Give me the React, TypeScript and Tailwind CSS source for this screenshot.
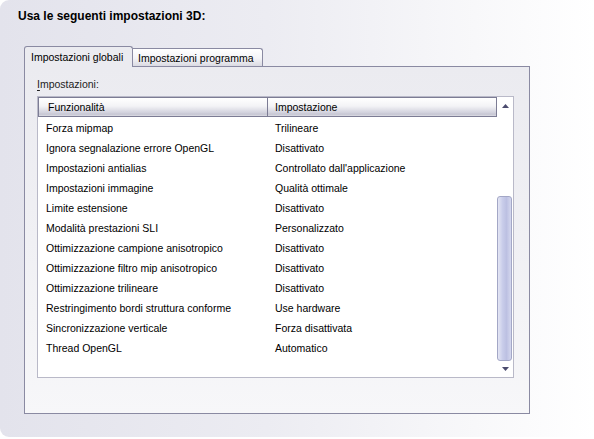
import React from "react";

const rows: [string, string][] = [
  ["Forza mipmap", "Trilineare"],
  ["Ignora segnalazione errore OpenGL", "Disattivato"],
  ["Impostazioni antialias", "Controllato dall'applicazione"],
  ["Impostazioni immagine", "Qualità ottimale"],
  ["Limite estensione", "Disattivato"],
  ["Modalità prestazioni SLI", "Personalizzato"],
  ["Ottimizzazione campione anisotropico", "Disattivato"],
  ["Ottimizzazione filtro mip anisotropico", "Disattivato"],
  ["Ottimizzazione trilineare", "Disattivato"],
  ["Restringimento bordi struttura conforme", "Use hardware"],
  ["Sincronizzazione verticale", "Forza disattivata"],
  ["Thread OpenGL", "Automatico"],
];

function Arrow({ up }: { up?: boolean }) {
  return (
    <svg width="7" height="4" viewBox="0 0 7 4">
      {up ? (
        <polygon points="0,4 7,4 3.5,0" fill="#4b4b6e" />
      ) : (
        <polygon points="0,0 7,0 3.5,4" fill="#4b4b6e" />
      )}
    </svg>
  );
}

export default function App() {
  return (
    <div className="w-[594px] h-[439px] bg-white font-['Liberation_Sans',Arial,sans-serif] text-[10.5px] text-black overflow-hidden">
      <div className="h-[437px] rounded-l-[9px] bg-[linear-gradient(to_right,#e3e3ec_0%,#ececf2_45%,#f8f8fa_80%,#ffffff_100%)] pt-[9px] pl-[18px]">
        <div className="font-bold text-[12px] leading-[14px] h-[14px]">Usa le seguenti impostazioni 3D:</div>

        <div className="ml-[6px] mt-[23px] w-[506px]">
          {/* tabs */}
          <div className="flex items-end h-[20px] relative z-10">
            <div className="w-[109px] h-[21px] -mb-[1px] border border-b-0 border-[#8a8aa2] rounded-tl-[3px] rounded-tr-[3px] bg-[#ebebf0] pl-[6px] leading-[20px]">
              Impostazioni globali
            </div>
            <div className="w-[130px] h-[18px] border border-b-0 border-l-0 border-[#8a8aa2] rounded-tr-[3px] bg-[linear-gradient(to_bottom,#ffffff_0%,#f4f4f7_55%,#dadae2_100%)] pl-[5px] leading-[19px]">
              Impostazioni programma
            </div>
          </div>

          {/* panel */}
          <div className="h-[348px] border border-[#8a8aa2] bg-[linear-gradient(to_bottom,#ebebf0_0%,#f0f0f4_50%,#f7f7f9_100%)] pl-[12px] pt-[11px]">
            <div className="leading-[13px] h-[13px] text-[#222]">
              <span className="underline underline-offset-2">I</span>mpostazioni:
            </div>

            <div className="mt-[5px] w-[477px] h-[282px] border border-[#b9b9c8] bg-white flex">
              <div className="flex-1 flex flex-col">
                <div className="flex h-[20px]">
                  <div className="w-[230px] h-[20px] border border-[#7c7c94] bg-[linear-gradient(to_bottom,#ffffff_0%,#f3f3f6_45%,#d3d3de_80%,#c6c6d3_90%,#dcdce4_100%)] pl-[9px] leading-[18px]">
                    Funzionalità
                  </div>
                  <div className="flex-1 h-[20px] border border-l-0 border-[#7c7c94] bg-[linear-gradient(to_bottom,#ffffff_0%,#f3f3f6_45%,#d3d3de_80%,#c6c6d3_90%,#dcdce4_100%)] pl-[7px] leading-[18px]">
                    Impostazione
                  </div>
                </div>
                <div className="pt-[2px]">
                  {rows.map(([a, b], i) => (
                    <div key={i} className="flex h-[20px] items-center">
                      <div className="w-[230px] pl-[8px] whitespace-nowrap">{a}</div>
                      <div className="flex-1 pl-[7px] whitespace-nowrap">{b}</div>
                    </div>
                  ))}
                </div>
              </div>

              {/* scrollbar */}
              <div className="w-[16px] flex flex-col">
                <div className="h-[16px] flex items-center justify-center pt-[1px]">
                  <Arrow up />
                </div>
                <div className="h-[83px]" />
                <div className="h-[165px] w-[15px] rounded-[3px] border border-[#a3a7c6] bg-[linear-gradient(to_right,#e4e6f4_0%,#c9cdea_35%,#bcc0e2_65%,#d4d7ee_100%)]" />
                <div className="flex-1 flex items-center justify-center">
                  <Arrow />
                </div>
              </div>
            </div>
          </div>
        </div>
      </div>
    </div>
  );
}
